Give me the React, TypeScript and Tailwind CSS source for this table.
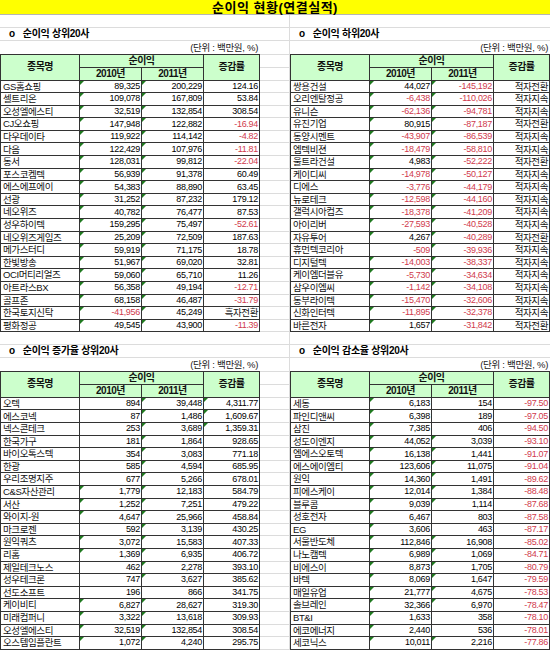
type Row = [string, string, string, string];

const TOP: Row[] = [
  ['GS홈쇼핑', '89,325', '200,229', '124.16'],
  ['셀트리온', '109,078', '167,809', '53.84'],
  ['오성엘에스티', '32,519', '132,854', '308.54'],
  ['CJ오쇼핑', '147,948', '122,882', '-16.94'],
  ['다우데이타', '119,922', '114,142', '-4.82'],
  ['다음', '122,429', '107,976', '-11.81'],
  ['동서', '128,031', '99,812', '-22.04'],
  ['포스코켐텍', '56,939', '91,378', '60.49'],
  ['에스에프에이', '54,383', '88,890', '63.45'],
  ['선광', '31,252', '87,232', '179.12'],
  ['네오위즈', '40,782', '76,477', '87.53'],
  ['성우하이텍', '159,295', '75,497', '-52.61'],
  ['네오위즈게임즈', '25,209', '72,509', '187.63'],
  ['메가스터디', '59,919', '71,175', '18.78'],
  ['한빛방송', '51,967', '69,020', '32.81'],
  ['OCI머티리얼즈', '59,060', '65,710', '11.26'],
  ['아트라스BX', '56,358', '49,194', '-12.71'],
  ['골프존', '68,158', '46,487', '-31.79'],
  ['한국토지신탁', '-41,956', '45,249', '흑자전환'],
  ['평화정공', '49,545', '43,900', '-11.39'],
];

const BOTTOM: Row[] = [
  ['쌍용건설', '44,027', '-145,192', '적자전환'],
  ['오리엔탈정공', '-6,438', '-110,026', '적자지속'],
  ['유니슨', '-62,136', '-94,781', '적자지속'],
  ['유진기업', '80,915', '-87,187', '적자전환'],
  ['동양시멘트', '-43,907', '-86,539', '적자지속'],
  ['엠텍비젼', '-18,479', '-58,810', '적자지속'],
  ['울트라건설', '4,983', '-52,222', '적자전환'],
  ['케이디씨', '-14,978', '-50,127', '적자지속'],
  ['디에스', '-3,776', '-44,179', '적자지속'],
  ['뉴로테크', '-12,598', '-44,160', '적자지속'],
  ['갤럭시아컴즈', '-18,378', '-41,209', '적자지속'],
  ['아이리버', '-27,593', '-40,528', '적자지속'],
  ['자유투어', '4,267', '-40,289', '적자전환'],
  ['휴먼텍코리아', '-509', '-39,936', '적자지속'],
  ['디지털텍', '-14,003', '-38,337', '적자지속'],
  ['케이엠더블유', '-5,730', '-34,634', '적자지속'],
  ['삼우이엠씨', '-1,142', '-34,108', '적자지속'],
  ['동부라이텍', '-15,470', '-32,606', '적자지속'],
  ['신화인터텍', '-11,895', '-32,378', '적자지속'],
  ['바른전자', '1,657', '-31,842', '적자전환'],
];

const GAIN: Row[] = [
  ['오텍', '894', '39,448', '4,311.77'],
  ['에스코넥', '87', '1,486', '1,609.67'],
  ['넥스콘테크', '253', '3,689', '1,359.31'],
  ['한국가구', '181', '1,864', '928.65'],
  ['바이오톡스텍', '354', '3,083', '771.18'],
  ['한광', '585', '4,594', '685.95'],
  ['우리조명지주', '677', '5,266', '678.01'],
  ['C&S자산관리', '1,779', '12,183', '584.79'],
  ['서산', '1,252', '7,251', '479.22'],
  ['와이지-원', '4,647', '25,966', '458.84'],
  ['마크로젠', '592', '3,139', '430.25'],
  ['원익쿼츠', '3,072', '15,583', '407.33'],
  ['리홈', '1,369', '6,935', '406.72'],
  ['제일테크노스', '462', '2,278', '393.10'],
  ['성우테크론', '747', '3,627', '385.62'],
  ['선도소프트', '196', '866', '341.75'],
  ['케이비티', '6,827', '28,627', '319.30'],
  ['미래컴퍼니', '3,322', '13,618', '309.93'],
  ['오성엘에스티', '32,519', '132,854', '308.54'],
  ['오스템임플란트', '1,072', '4,240', '295.75'],
];

const DROP: Row[] = [
  ['세동', '6,183', '154', '-97.50'],
  ['파인디앤씨', '6,398', '189', '-97.05'],
  ['삼진', '7,385', '406', '-94.50'],
  ['성도이엔지', '44,052', '3,039', '-93.10'],
  ['엠에스오토텍', '16,138', '1,441', '-91.07'],
  ['에스에이엠티', '123,606', '11,075', '-91.04'],
  ['원익', '14,360', '1,491', '-89.62'],
  ['피에스케이', '12,014', '1,384', '-88.48'],
  ['블루콤', '9,039', '1,114', '-87.68'],
  ['성호전자', '6,467', '803', '-87.58'],
  ['EG', '3,606', '463', '-87.17'],
  ['서울반도체', '112,846', '16,908', '-85.02'],
  ['나노캠텍', '6,989', '1,069', '-84.71'],
  ['비에스이', '8,873', '1,705', '-80.79'],
  ['바텍', '8,069', '1,647', '-79.59'],
  ['매일유업', '21,777', '4,675', '-78.53'],
  ['솔브레인', '32,366', '6,970', '-78.47'],
  ['BT&I', '1,633', '358', '-78.10'],
  ['에코에너지', '2,440', '536', '-78.01'],
  ['세코닉스', '10,011', '2,216', '-77.86'],
];

// excel "number stored as text" marker
function Flag() {
  return (
    <svg className="absolute left-0 top-0" width="4" height="4" viewBox="0 0 4 4">
      <polygon points="0,0 4,0 0,4" fill="#1f7a1f" />
    </svg>
  );
}

function ValueCell({ v }: { v: string }) {
  const isNum = /^[-\d,.]+$/.test(v);
  const neg = v.startsWith('-');
  return (
    <div className="relative flex items-center justify-end border-r border-b border-[#333] pr-[1px] overflow-hidden">
      {v.includes(',') && <Flag />}
      <span
        className={
          isNum
            ? `text-[9px] tracking-[-0.3px] ${neg ? 'text-[#d03a4c]' : 'text-black'}`
            : 'text-[9.5px] tracking-[-0.4px] text-[#111]'
        }
      >
        {v}
      </span>
    </div>
  );
}

function SheetTable({ rows }: { rows: Row[] }) {
  return (
    <div className="border-l border-t border-[#333] w-[260px]">
      <div className="grid grid-cols-[79px_62px_62px_56px] grid-rows-[13px_13px] bg-[#ccffcc] font-bold text-[10px] leading-none text-[#111]">
        <div className="row-span-2 flex items-center justify-center border-r border-b border-[#333] tracking-[-0.5px]">종목명</div>
        <div className="col-span-2 flex items-center justify-center border-r border-b border-[#333] tracking-[-0.5px]">순이익</div>
        <div className="row-span-2 flex items-center justify-center border-r border-b border-[#333] tracking-[-0.5px]">증감률</div>
        <div className="flex items-center justify-center border-r border-b border-[#333] tracking-[-0.5px]">2010년</div>
        <div className="flex items-center justify-center border-r border-b border-[#333] tracking-[-0.5px]">2011년</div>
      </div>
      {rows.map((r) => (
        <div key={r[0]} className="grid grid-cols-[79px_62px_62px_56px] h-[12.6px] leading-none">
          <div className="flex items-center border-r border-b border-[#333] pl-[2px] text-[9.5px] tracking-[-0.4px] whitespace-nowrap overflow-hidden text-[#111]">
            {r[0]}
          </div>
          <ValueCell v={r[1]} />
          <ValueCell v={r[2]} />
          <ValueCell v={r[3]} />
        </div>
      ))}
    </div>
  );
}

function Section({ title, rows }: { title: string; rows: Row[] }) {
  return (
    <div className="flex flex-col">
      <div className="h-[13px] border-b border-[#dcdcdc]" />
      <div className="h-[13px] border-b border-[#dcdcdc] flex items-center pl-[9px] text-[10px] font-bold leading-none tracking-[-0.3px]">
        <span className="mr-[8px]">o</span>
        <span>{title}</span>
      </div>
      <div className="h-[12.5px] flex items-center justify-end pr-[2px] text-[9.5px] leading-none tracking-[-0.3px] text-[#222]">
        (단위 : 백만원, %)
      </div>
      <SheetTable rows={rows} />
    </div>
  );
}

function GapBlock() {
  return (
    <>
      <div className="h-[13px] border-b border-[#dcdcdc]" />
      <div className="h-[13px] border-b border-[#dcdcdc]" />
      <div className="h-[13.5px] border-b border-[#dcdcdc]" />
      <div className="h-[13px] border-b border-[#dcdcdc]" />
      <div className="h-[13px] border-b border-[#dcdcdc]" />
      {Array.from({ length: 20 }).map((_, i) => (
        <div key={i} className="h-[12.6px] border-b border-[#dcdcdc]" />
      ))}
    </>
  );
}

export default function App() {
  return (
    <div className="w-[550px] h-[650px] overflow-hidden bg-white text-black font-['Liberation_Sans','Noto_Sans_CJK_KR',sans-serif]">
      <div className="h-[15px] bg-[#ffff00] border-b border-[#b5b5b5] flex items-center justify-center text-[13px] font-bold leading-none tracking-[0.5px]">
        순이익 현황(연결실적)
      </div>
      <div className="flex">
        <div className="w-[260px] flex flex-col">
          <Section title="순이익 상위20사" rows={TOP} />
          <Section title="순이익 증가율 상위20사" rows={GAIN} />
        </div>
        <div className="w-[30px] flex flex-col border-r border-[#dcdcdc]">
          <GapBlock />
          <GapBlock />
        </div>
        <div className="w-[260px] flex flex-col">
          <Section title="순이익 하위20사" rows={BOTTOM} />
          <Section title="순이익 감소율 상위20사" rows={DROP} />
        </div>
      </div>
    </div>
  );
}
